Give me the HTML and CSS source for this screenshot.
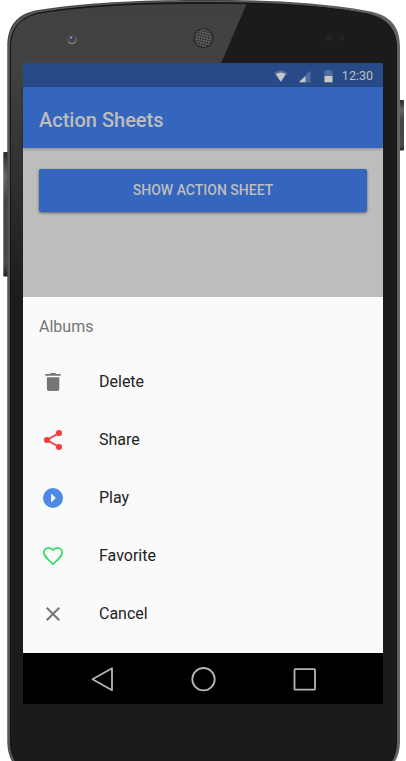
FILE: index.html
```html
<!DOCTYPE html>
<html lang="en">
<head>
<meta charset="utf-8">
<title>Action Sheets</title>
<link rel="stylesheet" href="styles.css">
</head>
<body>
<div class="phone">
  <svg class="shell" viewBox="0 0 406 761" aria-hidden="true">
    <defs>
      <linearGradient id="gloss" gradientUnits="userSpaceOnUse" x1="0" y1="0" x2="0" y2="300">
        <stop offset="0" stop-color="#414141"/>
        <stop offset=".22" stop-color="#424242"/>
        <stop offset="1" stop-color="#1b1b1b"/>
      </linearGradient>
      <linearGradient id="rim" x1="0" y1="0" x2="1" y2="0">
        <stop offset="0" stop-color="#4b4b4b"/>
        <stop offset=".5" stop-color="#414141"/>
        <stop offset="1" stop-color="#686868"/>
      </linearGradient>
      <linearGradient id="key" x1="0" y1="0" x2="0" y2="1">
        <stop offset="0" stop-color="#292929"/>
        <stop offset=".2" stop-color="#666"/>
        <stop offset=".4" stop-color="#444"/>
        <stop offset=".9" stop-color="#4a4a4a"/>
        <stop offset="1" stop-color="#222"/>
      </linearGradient>
      <pattern id="mesh" width="2.600" height="2.600" patternUnits="userSpaceOnUse" patternTransform="rotate(12)">
        <rect width="2.600" height="2.600" fill="#696969"/>
        <circle cx="1.300" cy="1.300" r=".95" fill="#161616"/>
      </pattern>
      <clipPath id="face">
        <path d="M11 770V49C11 29 19 18 40 13.500C95 5 155 4 203.500 4C255 4 312 5 367 14C388 19 396 29 396 49V770Z"/>
      </clipPath>
    </defs>
    <rect x="3.300" y="152" width="6" height="124.500" rx="1" fill="url(#key)"/>
    <rect x="398" y="100" width="6" height="50.500" rx="1" fill="url(#key)"/>
    <path d="M7.300 742V47C7.300 26 16 14 38 10C95 1 155 0 203.500 0C255 0 312 1 368 11C391 15 400 27 400 47V742Q400 754 394 763H13Q7.300 754 7.300 742Z" fill="url(#rim)"/>
    <path d="M8.800 742V47C8.800 27 18 16 39 11.500C95 2.500 155 1.500 203.500 1.500C255 1.500 312 2.500 367 12.500C389 17 398 28 398 47V742Q398 754 392 763H15Q8.800 754 8.800 742Z" fill="none" stroke="#5c5c5c"/>
    <path d="M10.500 742V48C10.500 29 19 17.500 40 12.700C95 3.700 155 2.700 203.500 2.700C255 2.700 312 3.700 366 13.700C387 18 396.500 29 396.500 48V742Q396.500 754 390.500 763H16.500Q10.500 754 10.500 742Z" fill="#1b1b1b" stroke="#151515"/>
    <path d="M0 3H247L119 300H0Z" fill="url(#gloss)" clip-path="url(#face)"/>
    <circle cx="72" cy="39.500" r="4.800" fill="#808080"/>
    <circle cx="71.700" cy="38.400" r="4.500" fill="#48484a"/>
    <circle cx="71.300" cy="39" r="2" fill="#35457a"/>
    <circle cx="71" cy="37.500" r=".9" fill="#b5bac9"/>
    <circle cx="203.500" cy="38" r="10" fill="#202020" stroke="#343434"/>
    <circle cx="203.500" cy="38" r="9" fill="url(#mesh)"/>
    <circle cx="329" cy="37.500" r="4" fill="#222"/>
    <circle cx="342" cy="38" r="2.500" fill="#242424"/>
  </svg>
  <main class="screen">
    <div class="status">
      <svg class="signals" viewBox="0 0 62 14" aria-hidden="true">
        <path d="M0 3.800Q6.800-1.500 13.600 3.800L6.800 12.800Z" fill="#526da0"/>
        <path d="M1.800 5.300Q6.800 1.700 11.800 5.300L6.800 12.800Z" fill="#c9c7c5"/>
        <path d="M25 13.200V12.500L36.500 1.500V13.200Z" fill="#526da0"/>
        <path d="M25 13.200L31.500 7V13.200Z" fill="#c9c7c5"/>
        <path d="M50.500 13V2H52.500V.8H56.500V2H58.500V13Z" fill="#526da0"/>
        <path d="M50.500 7H58.500V13.300H50.500Z" fill="#c9c7c5"/>
      </svg>
      <span>12:30</span>
    </div>
    <header class="toolbar"><h1>Action Sheets</h1></header>
    <section class="content"><button class="show">SHOW ACTION SHEET</button></section>
    <section class="sheet">
      <h2>Albums</h2>
      <button class="item">
        <svg viewBox="0 0 20 20"><path d="M3.900 5.200H16.300V16.900Q16.300 18.900 14.300 18.900H5.900Q3.900 18.900 3.900 16.900ZM2.300 2H7L8 1H12.200L13.200 2H17.700V3.800H2.300Z" fill="#757575"/></svg>
        <span>Delete</span>
      </button>
      <button class="item">
        <svg viewBox="0 0 20 20"><path d="M16 3L4 10L16 17" fill="none" stroke="#f53d3d" stroke-width="1.900"/><g fill="#f53d3d"><circle cx="16" cy="3" r="3.100"/><circle cx="4" cy="10" r="3.100"/><circle cx="16" cy="17" r="3.100"/></g></svg>
        <span>Share</span>
      </button>
      <button class="item">
        <svg viewBox="0 0 20 20"><circle cx="10" cy="10" r="10" fill="#4e89e6"/><path d="M8.200 5.500L12.800 10L8.200 14.500Z" fill="#fff"/></svg>
        <span>Play</span>
      </button>
      <button class="item">
        <svg viewBox="0 0 20 20"><path d="M10 18.200L8.600 16.900C3.500 12.300 .9 9.900 .9 6.500C.9 3.800 3 1.800 5.600 1.800C7.300 1.800 8.900 2.600 10 4.100C11.100 2.600 12.700 1.800 14.400 1.800C17 1.800 19.100 3.800 19.100 6.500C19.100 9.900 16.500 12.300 11.400 16.900Z" fill="none" stroke="#32db64" stroke-width="1.700"/></svg>
        <span>Favorite</span>
      </button>
      <button class="item">
        <svg viewBox="0 0 20 20"><path d="M3.700 3.700L16.300 16.300M16.300 3.700L3.700 16.300" stroke="#757575" stroke-width="2"/></svg>
        <span>Cancel</span>
      </button>
    </section>
    <nav class="nav">
      <svg viewBox="0 0 26 26"><path d="M23 2.200V24.200L3.500 13.200Z"/></svg>
      <svg viewBox="0 0 26 26"><circle cx="13.500" cy="13.200" r="11.200"/></svg>
      <svg viewBox="0 0 26 26"><rect x="3.500" y="3.200" width="20.500" height="20.500" rx=".7"/></svg>
    </nav>
  </main>
</div>
</body>
</html>
```
FILE: styles.css
```css
* { box-sizing: border-box; }
body { margin: 0; background: #fff; font-family: Roboto, "Liberation Sans", sans-serif; }
.phone { position: relative; width: 406px; height: 761px; padding: 63px 23px 57px 23px; overflow: hidden; }
.shell { position: absolute; inset: 0; width: 406px; height: 761px; }
.screen { position: relative; display: flex; flex-direction: column; width: 360px; height: 641px; background: #bdbdbd; }
.status { display: flex; align-items: center; justify-content: flex-end; height: 24px; padding: 1px 10px 0 0; background: #284b88; color: #bebec0; font-size: 12.5px; }
.signals { width: 62px; height: 14px; margin-right: 6px; }
.toolbar { position: relative; height: 61px; padding: 5px 16px 0; display: flex; align-items: center; background: #3566be; box-shadow: 0 1px 3px rgba(0,0,0,.3); }
h1 { margin: 0; color: #bdbdbd; font-size: 20px; font-weight: 500; }
.content { height: 149px; padding: 21px 16px; }
button { font-family: inherit; border: 0; }
.show { display: block; width: 100%; height: 43px; padding: 0 0 1px; border-radius: 2px; background: #3566be; color: #bdbdbd; font-size: 14px; font-weight: 500; box-shadow: 0 1px 3px rgba(0,0,0,.5); }
.sheet { height: 356px; padding: 4px 16px 0; background: #fafafa; }
h2 { margin: 0; height: 52px; line-height: 52px; color: #757575; font-size: 16px; font-weight: 400; }
.item { display: flex; align-items: center; gap: 36px; width: 100%; height: 58px; padding: 0 0 0 4px; background: none; color: #222; font-size: 16px; text-align: left; }
.item svg { width: 20px; height: 20px; }
.item span { padding-bottom: 2px; }
.nav { display: flex; align-items: center; justify-content: center; gap: 75px; height: 51px; padding-top: 1px; background: #000; }
.nav svg { width: 26px; height: 26px; fill: none; stroke: #b5b5b5; stroke-width: 1.800; stroke-linejoin: round; }
```
